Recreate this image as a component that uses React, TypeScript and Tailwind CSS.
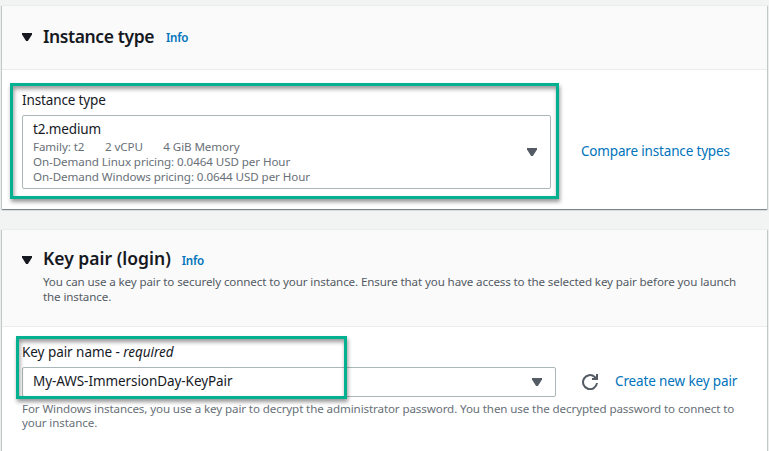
import type { ReactNode } from "react";

function Caret({ className }: { className: string }) {
  return (
    <svg viewBox="0 0 10 8" className={`h-2 w-2.5 shrink-0 fill-current ${className}`}>
      <path d="M0 0h10v1.4L5.9 8H4.1L0 1.4z" />
    </svg>
  );
}

function RefreshIcon() {
  return (
    <svg viewBox="0 0 16 16" className="size-4 shrink-0 fill-none stroke-[#545b64] stroke-2">
      <path d="M15 9a7 7 0 1 1-2.3-6.1L15 5" />
      <path d="M15 0v5h-5" />
    </svg>
  );
}

function InfoLink() {
  return (
    <a className="text-[11.6px] leading-4 font-semibold tracking-[-0.3px] text-[#0073bb]">Info</a>
  );
}

function Card({ header, children, className }: { header: ReactNode; children: ReactNode; className: string }) {
  return (
    <section
      className={`flex flex-col border-t border-[#eaeded] bg-white shadow-[0_1px_1px_0_rgba(0,28,36,0.3),1px_1px_1px_0_rgba(0,28,36,0.15),-1px_1px_1px_0_rgba(0,28,36,0.15)] ${className}`}
    >
      <div className="border-b border-[#eaeded] bg-[#fafafa] pl-5">{header}</div>
      {children}
    </section>
  );
}

function Highlight({ className }: { className: string }) {
  return (
    <div
      className={`pointer-events-none absolute border-3 border-[#03b190] shadow-[1px_3px_4px_rgba(0,0,0,0.4),inset_1px_3px_4px_rgba(0,0,0,0.4)] ${className}`}
    />
  );
}

export default function App() {
  return (
    <main className="flex h-[451px] flex-col gap-5 overflow-hidden bg-[#f2f3f3] pt-[5px] pr-0.5 pl-0.5 font-['Noto_Sans','Open_Sans',sans-serif] text-[13.5px] tracking-[-0.13px] text-[#16191f]">
      <Card
        className="h-[204px] shrink-0"
        header={
          <div className="flex h-[63px] pt-[18px]">
            <Caret className="mt-[9px] text-[#16191f]" />
            <h2 className="ml-[11px] text-[17.5px] leading-6 font-semibold tracking-[-0.4px]">Instance type</h2>
            <div className="ml-3 pt-[5px] leading-4">
              <InfoLink />
            </div>
          </div>
        }
      >
        <div className="relative flex h-[139px] px-5 pt-[19px]">
          <div className="w-[529px]">
            <div className="leading-[22px]">Instance type</div>
            <div className="mt-1 flex h-[74px] items-center justify-between rounded-[2px] border border-[#aab7b8] pr-[13px] pl-2.5">
              <div className="text-[11.6px] leading-[15px] tracking-[-0.08px] text-[#687078]">
                <div className="pt-0.5 text-[13.5px] leading-[19px] tracking-[-0.13px] text-[#16191f]">t2.medium</div>
                <div className="flex gap-[20.5px]">
                  <span>Family: t2</span>
                  <span>2 vCPU</span>
                  <span>4 GiB Memory</span>
                </div>
                <div>On-Demand Linux pricing: 0.0464 USD per Hour</div>
                <div className="mb-0.5">On-Demand Windows pricing: 0.0644 USD per Hour</div>
              </div>
              <Caret className="text-[#545b64]" />
            </div>
          </div>
          <a className="mt-[51px] ml-[30px] leading-[22px] tracking-[-0.17px] text-[#0073bb]">Compare instance types</a>
          <Highlight className="top-[13px] left-2 h-[116px] w-[549px]" />
        </div>
      </Card>
      <Card
        className="h-[260px] shrink-0"
        header={
          <div className="flex h-24 pt-4">
            <Caret className="mt-[10px] text-[#16191f]" />
            <div className="ml-[11px]">
              <div className="flex h-6">
                <h2 className="text-[17.5px] leading-6 font-semibold tracking-[0px]">Key pair (login)</h2>
                <div className="ml-[11px] pt-1.5 leading-4">
                  <InfoLink />
                </div>
              </div>
              <p className="mt-1 w-[700px] text-[11.6px] leading-[15px] tracking-[-0.12px] text-[#545b64]">
                You can use a key pair to securely connect to your instance. Ensure that you have access to the selected
                key pair before you launch the instance.
              </p>
            </div>
          </div>
        }
      >
        <div className="relative flex flex-col px-5 pt-3.5">
          <div className="leading-[22px] tracking-[-0.05px]">
            Key pair name - <i>required</i>
          </div>
          <div className="mt-1 flex items-center">
            <div className="flex h-[30px] w-[534px] items-center justify-between rounded-[2px] border border-[#aab7b8] pr-[13px] pl-2.5">
              <span className="pb-0.5 tracking-[-0.07px]">My-AWS-ImmersionDay-KeyPair</span>
              <Caret className="text-[#545b64]" />
            </div>
            <div className="ml-[26px] flex items-center gap-[17px]">
              <RefreshIcon />
              <a className="pb-0.5 leading-[22px] text-[#0073bb]">Create new key pair</a>
            </div>
          </div>
          <p className="mt-[5px] w-[720px] text-[11.6px] leading-[14px] tracking-[-0.11px] text-[#687078]">
            For Windows instances, you use a key pair to decrypt the administrator password. You then use the decrypted
            password to connect to your instance.
          </p>
          <Highlight className="top-[9px] left-3.5 h-[63px] w-[331px]" />
        </div>
      </Card>
    </main>
  );
}
